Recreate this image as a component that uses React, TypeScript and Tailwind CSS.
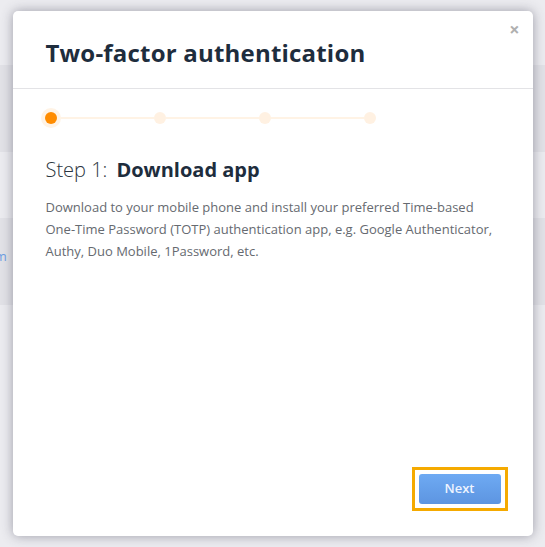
export default function App() {
  const rows = [
    { h: 'h-[65px]', bg: 'bg-[#ececf0]', text: '' },
    { h: 'h-[87px]', bg: 'bg-[#e2e2e7]', text: 'Sign in' },
    { h: 'h-[66px]', bg: 'bg-[#ececf0]', text: '' },
    { h: 'h-[87px]', bg: 'bg-[#e2e2e7]', text: 'Custom' },
    { h: 'h-[242px]', bg: 'bg-[#ececf0]', text: '' },
  ];

  return (
    <div className="relative h-[547px] w-[545px] overflow-hidden bg-[#ececf0] font-['Open_Sans',sans-serif]">
      {/* page behind the overlay */}
      <div className="flex flex-col">
        {rows.map((row, i) => (
          <div key={i} className={`${row.h} ${row.bg} flex items-center pb-[10px]`}>
            {row.text && (
              <span className="ml-[-40px] text-[13px] text-[#6f9fe3]">{row.text}</span>
            )}
          </div>
        ))}
      </div>

      {/* modal */}
      <div className="absolute inset-0 flex items-center justify-center">
        <div className="relative flex h-[525px] w-[520px] flex-col rounded-[5px] bg-white shadow-[0_0_12px_rgba(60,60,80,0.45)]">
          <button className="absolute right-[13px] top-[9px] text-[18px] font-bold leading-none text-[#b0b0b0]">
            ×
          </button>

          <div className="flex h-[78px] items-center border-b border-[#e3e3e6] px-[33px] pt-[7px]">
            <h1 className="text-[24px] font-bold tracking-[0.2px] text-[#1e2d3d]">Two-factor authentication</h1>
          </div>

          <div className="flex flex-1 flex-col px-[33px]">
            <div className="mt-[19px] flex w-[339px] items-center -ml-[5px]">
              <div className="flex h-5 w-5 items-center justify-center rounded-full bg-[#fff3e5]">
                <div className="h-3 w-3 rounded-full bg-[#ff8c00]" />
              </div>
              <div className="h-[2px] flex-1 bg-[#fff3e5]" />
              <div className="h-3 w-3 rounded-full bg-[#fff1e2]" />
              <div className="h-[2px] flex-1 bg-[#fff3e5]" />
              <div className="h-3 w-3 rounded-full bg-[#fff1e2]" />
              <div className="h-[2px] flex-1 bg-[#fff3e5]" />
              <div className="mr-1 h-3 w-3 rounded-full bg-[#fff1e2]" />
            </div>

            <h2 className="mt-[28px] text-[20px] leading-[28px] text-[#2b3540]">
              <span className="font-light">Step 1:</span>
              <span className="ml-[9px] font-bold text-[#1e2d3d]">Download app</span>
            </h2>

            <p className="mt-[12px] text-[13px] leading-[22px] text-[#666a70]">
              Download to your mobile phone and install your preferred Time-based One-Time Password (TOTP)
              authentication app, e.g. Google Authenticator, Authy, Duo Mobile, 1Password, etc.
            </p>

            <div className="mt-auto mb-[25px] flex justify-end -mr-[8px]">
              <div className="border-[3px] border-[#f5aa00] p-[4px]">
                <button className="block h-[30px] w-[82px] rounded-[3px] bg-gradient-to-b from-[#6eaaf3] to-[#5d95e1] text-[13px] font-semibold text-[#eef4ff]">
                  Next
                </button>
              </div>
            </div>
          </div>
        </div>
      </div>
    </div>
  );
}
